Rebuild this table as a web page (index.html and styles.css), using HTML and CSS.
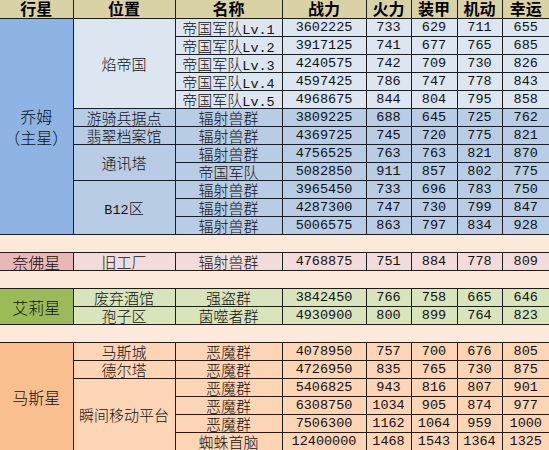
FILE: index.html
```html
<!DOCTYPE html>
<html lang="zh">
<head>
<meta charset="utf-8">
<title>行星</title>
<link rel="stylesheet" href="styles.css">
</head>
<body>
<table class="sheet">
  <colgroup>
    <col class="c1"><col class="c2"><col class="c3"><col class="c4"><col class="c5"><col class="c6"><col class="c7"><col class="c8">
  </colgroup>
  <thead>
    <tr class="head">
      <th class="first">行星</th><th>位置</th><th>名称</th><th>战力</th><th>火力</th><th>装甲</th><th>机动</th><th class="last">幸运</th>
    </tr>
  </thead>
  <tbody>
    <tr class="light">
      <td class="first planet-jm" rowspan="12">乔姆<br>（主星）</td>
      <td rowspan="5">焰帝国</td>
      <td>帝国军队<span class="n">Lv.1</span></td><td class="n">3602225</td><td class="n">733</td><td class="n">629</td><td class="n">711</td><td class="n last">655</td>
    </tr>
    <tr class="light"><td>帝国军队<span class="n">Lv.2</span></td><td class="n">3917125</td><td class="n">741</td><td class="n">677</td><td class="n">765</td><td class="n last">685</td></tr>
    <tr class="light"><td>帝国军队<span class="n">Lv.3</span></td><td class="n">4240575</td><td class="n">742</td><td class="n">709</td><td class="n">730</td><td class="n last">826</td></tr>
    <tr class="light"><td>帝国军队<span class="n">Lv.4</span></td><td class="n">4597425</td><td class="n">786</td><td class="n">747</td><td class="n">778</td><td class="n last">843</td></tr>
    <tr class="light"><td>帝国军队<span class="n">Lv.5</span></td><td class="n">4968675</td><td class="n">844</td><td class="n">804</td><td class="n">795</td><td class="n last">858</td></tr>
    <tr class="blue"><td>游骑兵据点</td><td>辐射兽群</td><td class="n">3809225</td><td class="n">688</td><td class="n">645</td><td class="n">725</td><td class="n last">762</td></tr>
    <tr class="blue"><td>翡翠档案馆</td><td>辐射兽群</td><td class="n">4369725</td><td class="n">745</td><td class="n">720</td><td class="n">775</td><td class="n last">821</td></tr>
    <tr class="blue"><td rowspan="2">通讯塔</td><td>辐射兽群</td><td class="n">4756525</td><td class="n">763</td><td class="n">763</td><td class="n">821</td><td class="n last">870</td></tr>
    <tr class="blue"><td>帝国军队</td><td class="n">5082850</td><td class="n">911</td><td class="n">857</td><td class="n">802</td><td class="n last">775</td></tr>
    <tr class="blue"><td rowspan="3"><span class="n">B12</span>区</td><td>辐射兽群</td><td class="n">3965450</td><td class="n">733</td><td class="n">696</td><td class="n">783</td><td class="n last">750</td></tr>
    <tr class="blue"><td>辐射兽群</td><td class="n">4287300</td><td class="n">747</td><td class="n">730</td><td class="n">799</td><td class="n last">847</td></tr>
    <tr class="blue"><td>辐射兽群</td><td class="n">5006575</td><td class="n">863</td><td class="n">797</td><td class="n">834</td><td class="n last">928</td></tr>

    <tr class="gap"><td class="first last" colspan="8"></td></tr>

    <tr class="pink">
      <td class="first planet-nf">奈佛星</td><td>旧工厂</td><td>辐射兽群</td><td class="n">4768875</td><td class="n">751</td><td class="n">884</td><td class="n">778</td><td class="n last">809</td>
    </tr>

    <tr class="gap"><td class="first last" colspan="8"></td></tr>

    <tr class="green">
      <td class="first planet-al" rowspan="2">艾莉星</td><td>废弃酒馆</td><td>强盗群</td><td class="n">3842450</td><td class="n">766</td><td class="n">758</td><td class="n">665</td><td class="n last">646</td>
    </tr>
    <tr class="green"><td>孢子区</td><td>菌噬者群</td><td class="n">4930900</td><td class="n">800</td><td class="n">899</td><td class="n">764</td><td class="n last">823</td></tr>

    <tr class="gap"><td class="first last" colspan="8"></td></tr>

    <tr class="orange">
      <td class="first planet-ms" rowspan="6">马斯星</td><td>马斯城</td><td>恶魔群</td><td class="n">4078950</td><td class="n">757</td><td class="n">700</td><td class="n">676</td><td class="n last">805</td>
    </tr>
    <tr class="orange"><td>德尔塔</td><td>恶魔群</td><td class="n">4726950</td><td class="n">835</td><td class="n">765</td><td class="n">730</td><td class="n last">875</td></tr>
    <tr class="orange"><td rowspan="4">瞬间移动平台</td><td>恶魔群</td><td class="n">5406825</td><td class="n">943</td><td class="n">816</td><td class="n">807</td><td class="n last">901</td></tr>
    <tr class="orange"><td>恶魔群</td><td class="n">6308750</td><td class="n">1034</td><td class="n">905</td><td class="n">874</td><td class="n last">977</td></tr>
    <tr class="orange"><td>恶魔群</td><td class="n">7506300</td><td class="n">1162</td><td class="n">1064</td><td class="n">959</td><td class="n last">1000</td></tr>
    <tr class="orange"><td>蜘蛛首脑</td><td class="n">12400000</td><td class="n">1468</td><td class="n">1543</td><td class="n">1364</td><td class="n last">1325</td></tr>
  </tbody>
</table>
</body>
</html>
```
FILE: styles.css
```css
html, body {
  margin: 0;
  padding: 0;
  background: #ffffff;
  overflow: hidden;
}

.sheet {
  border-collapse: collapse;
  table-layout: fixed;
  width: 549px;
  font-family: "Noto Sans CJK SC", sans-serif;
  font-size: 15px;
  font-weight: 300;
  color: #111;
}

.c1 { width: 73px; }
.c2 { width: 102px; }
.c3 { width: 107px; }
.c4 { width: 84px; }
.c5 { width: 45px; }
.c6 { width: 46px; }
.c7 { width: 45px; }
.c8 { width: 47px; }

.sheet tr { height: 18px; }

.sheet th,
.sheet td {
  padding: 1px 0 0 0;
  height: 16px;
  border: 1px solid #1c1c1c;
  text-align: center;
  vertical-align: middle;
  line-height: 16px;
  white-space: nowrap;
}

.sheet .first { border-left: none; }
.sheet .last { border-right: none; }

.head th {
  padding: 0;
  height: 17px;
  line-height: 17px;
  border-top: none;
  background: #d9d2a5;
  font-weight: 700;
  font-size: 16px;
  color: #000;
}

.n {
  font-family: "Liberation Mono", monospace;
  font-size: 13.5px;
  font-weight: 400;
}

.sheet span.n {
  line-height: 1px;
}

.light td { background: #dce6f1; }
.blue td { background: #b8cce4; }
.pink td { background: #f2dcdb; }
.green td { background: #d8e4bc; }
.orange td { background: #fcd5b4; }

.sheet td.planet-jm { background: #8db4e2; font-size: 16px; line-height: 21px; }
.sheet td.planet-nf { background: #e6b8b7; font-size: 16px; }
.sheet td.planet-al { background: #9bbb59; font-size: 16px; }
.sheet td.planet-ms { background: #fabf8f; font-size: 16px; }

.gap td { background: #fde9d9; }
```
